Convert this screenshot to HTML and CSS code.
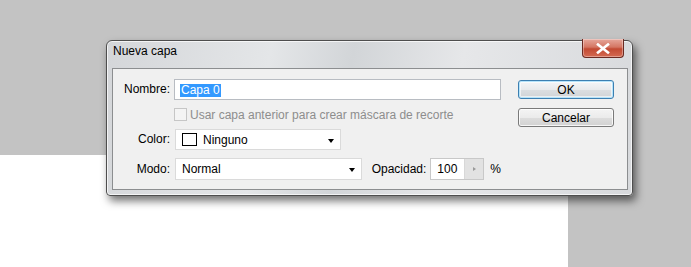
FILE: index.html
```html
<!DOCTYPE html>
<html lang="es">
<head>
    <meta charset="UTF-8">
    <meta name="viewport" content="width=device-width, initial-scale=1.0">
    <title>Nueva capa</title>
    <link rel="stylesheet" href="styles.css">
</head>
<body>

    <!-- Document canvas behind the dialog -->
    <div class="canvas"></div>

    <!-- New layer dialog -->
    <div class="dialog">
        <div class="titlebar">
            <span class="title">Nueva capa</span>
            <button class="close" aria-label="Cerrar">
                <svg width="14" height="11" viewBox="0 0 14 11">
                    <path d="M2 1.5 L12 9.5 M12 1.5 L2 9.5" stroke="#ffffff" stroke-width="2.6" stroke-linecap="square"/>
                </svg>
            </button>
        </div>

        <div class="panel">
            <div class="fields">
                <span class="lbl">Nombre:</span>
                <div class="name-input"><span class="selected">Capa 0</span></div>

                <span></span>
                <div class="check"><span class="box"></span>Usar capa anterior para crear máscara de recorte</div>

                <span class="lbl">Color:</span>
                <div class="select color-select">
                    <span class="swatch"></span>
                    <span class="select-text">Ninguno</span>
                    <span class="arrow"></span>
                </div>

                <span class="lbl lbl-mode">Modo:</span>
                <div class="mode-row">
                    <div class="select mode-select">
                        <span class="select-text">Normal</span>
                        <span class="arrow"></span>
                    </div>
                    <span class="opacity-lbl">Opacidad:</span>
                    <div class="spin">
                        <span class="spin-value">100</span>
                        <span class="spin-btn"><span class="spin-arrow"></span></span>
                    </div>
                    <span class="percent">%</span>
                </div>
            </div>

            <div class="buttons">
                <button class="btn btn-default">OK</button>
                <button class="btn">Cancelar</button>
            </div>
        </div>
    </div>

</body>
</html>
```

FILE: styles.css
```css
/* General Body Styling */
body {
    margin: 0;
    height: 267px;
    overflow: hidden;
    background-color: #c3c3c3;
    font-family: "Liberation Sans", Arial, sans-serif;
    font-size: 12px;
    color: #000;
}

/* White document area */
.canvas {
    margin-top: 155px;
    width: 568px;
    height: 112px;
    background-color: #fff;
}

/* Dialog window */
.dialog {
    position: absolute;
    left: 106px;
    top: 40px;
    width: 527px;
    height: 156px;
    box-sizing: border-box;
    border: 1px solid #4e4e4e;
    border-radius: 6px 6px 4px 4px;
    background: linear-gradient(100deg, #d4d6d9 0%, #e4e6e8 30%, #d2d5d8 45%, #e6e7e9 65%, #d7d9dc 100%);
    box-shadow: inset 0 0 0 1px rgba(255, 255, 255, 0.7), 3px 5px 9px rgba(0, 0, 0, 0.55);
}

.titlebar {
    position: relative;
    height: 27px;
    padding-left: 6px;
}

.title {
    display: block;
    padding-top: 3px;
    line-height: 14px;
}

.close {
    position: absolute;
    right: 8px;
    top: -2px;
    width: 42px;
    height: 19px;
    padding: 0;
    border: 1px solid #6b2a22;
    border-top: none;
    border-radius: 0 0 4px 4px;
    background: linear-gradient(#e6a79b 0%, #d47663 45%, #c24a33 55%, #d46a52 100%);
    box-shadow: inset 0 0 0 1px rgba(255, 255, 255, 0.35);
    display: flex;
    align-items: center;
    justify-content: center;
}

/* Inner panel */
.panel {
    display: flex;
    margin: 0 4px 0 5px;
    height: 122px;
    box-sizing: border-box;
    padding-top: 10px;
    border: 1px solid #8c8e90;
    background-color: #f0f0f0;
}

.fields {
    display: grid;
    grid-template-columns: 57px 327px;
    grid-template-rows: 21px 29px 29px 22px;
    column-gap: 4px;
    align-items: start;
}

.lbl {
    text-align: right;
    line-height: 21px;
}

.lbl-mode {
    line-height: 22px;
}

/* Name field */
.name-input {
    height: 21px;
    box-sizing: border-box;
    border: 1px solid #b8bcc2;
    background-color: #fff;
    padding: 3px 0 0 5px;
}

.selected {
    display: inline-block;
    background-color: #3399ff;
    color: #fff;
    line-height: 13px;
    padding: 0 1px;
}

/* Clipping mask checkbox */
.check {
    display: flex;
    align-items: center;
    gap: 3px;
    height: 29px;
    margin-left: 0;
    color: #8d8d8d;
}

.box {
    width: 11px;
    height: 11px;
    border: 1px solid #c6c6c6;
    background-color: #f4f4f4;
}

/* Dropdowns */
.select {
    position: relative;
    display: flex;
    align-items: center;
    height: 21px;
    box-sizing: border-box;
    border: 1px solid #dadada;
    background-color: #fff;
    padding-left: 6px;
}

.color-select {
    width: 166px;
    margin-left: 1px;
}

.swatch {
    width: 13px;
    height: 11px;
    border: 1px solid #000;
    margin-right: 6px;
}

.arrow {
    position: absolute;
    right: 6px;
    top: 9px;
    border-left: 3.5px solid transparent;
    border-right: 3.5px solid transparent;
    border-top: 4px solid #000;
}

.mode-row {
    display: flex;
    align-items: center;
    height: 22px;
}

.mode-select {
    width: 188px;
    height: 22px;
    margin-left: 1px;
}

.opacity-lbl {
    margin-left: 10px;
}

/* Opacity spinner */
.spin {
    display: flex;
    height: 22px;
    margin-left: 4px;
    box-sizing: border-box;
    border: 1px solid #c8c8c8;
    background-color: #fff;
}

.spin-value {
    width: 33px;
    padding-left: 6px;
    box-sizing: border-box;
    line-height: 20px;
}

.spin-btn {
    width: 18px;
    display: flex;
    align-items: center;
    justify-content: center;
    border-left: 1px solid #d8d8d8;
    background-color: #e2e2e2;
}

.spin-arrow {
    border-top: 2.5px solid transparent;
    border-bottom: 2.5px solid transparent;
    border-left: 3px solid #9a9a9a;
}

.percent {
    margin-left: 6px;
}

/* Button Styling */
.buttons {
    display: flex;
    flex-direction: column;
    gap: 9px;
    margin-left: 17px;
    padding-top: 1px;
}

.btn {
    width: 96px;
    height: 19px;
    padding: 0;
    font-family: inherit;
    font-size: 12px;
    color: #000;
    border: 1px solid #7a7a7a;
    border-radius: 3px;
    background: linear-gradient(#f4f4f4 0%, #ebebeb 50%, #dddddd 51%, #d2d2d2 100%);
    box-shadow: inset 0 0 0 1px rgba(255, 255, 255, 0.8);
}

.btn-default {
    border-color: #3c7fb1;
    background: linear-gradient(#eaf6fd 0%, #d9f0fc 50%, #bee6fd 51%, #a7d9f5 100%);
    box-shadow: inset 0 0 0 1px #b6e4fb, inset 0 0 0 2px rgba(255, 255, 255, 0.6);
    background: linear-gradient(#f4f6f8 0%, #e8eaec 50%, #dcdfe2 51%, #d0d3d6 100%);
}
```
